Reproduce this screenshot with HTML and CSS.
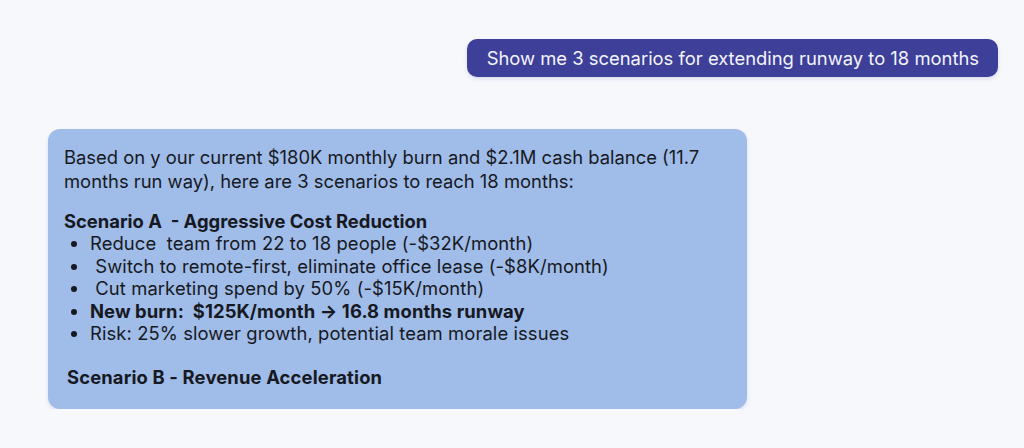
FILE: index.html
```html
<!DOCTYPE html>
<html>
<head>
<meta charset="utf-8">
<link rel="stylesheet" href="styles.css">
</head>
<body>
<main class="chat">
  <div class="row row-user">
    <div class="bubble-user">Show me 3 scenarios for extending runway to 18 months</div>
  </div>
  <div class="row row-ai">
    <div class="bubble-ai">
      <p class="intro">Based on y our current $180K monthly burn and $2.1M cash balance (11.7 months run way), here are 3 scenarios to reach 18 months:</p>
      <p class="heading">Scenario A &nbsp;- Aggressive Cost Reduction</p>
      <ul class="list">
        <li>Reduce &nbsp;team from 22 to 18 people (-$32K/month)</li>
        <li>&nbsp;Switch to remote-first, eliminate office lease (-$8K/month)</li>
        <li>&nbsp;Cut marketing spend by 50% (-$15K/month)</li>
        <li class="strong">New burn: &nbsp;$125K/month → 16.8 months runway</li>
        <li>Risk: 25% slower growth, potential team morale issues</li>
      </ul>
      <p class="heading heading-b">Scenario B - Revenue Acceleration</p>
    </div>
  </div>
</main>
</body>
</html>
```

FILE: styles.css
```css
html, body {
  margin: 0;
  padding: 0;
  background: #f7f8fc;
  font-family: Inter, "Noto Sans", sans-serif;
}
.chat {
  display: flex;
  flex-direction: column;
  padding: 39px 26px 0 48px;
}
.row {
  display: flex;
}
.row-user {
  justify-content: flex-end;
}
.bubble-user {
  background: #3d3f98;
  color: #f3f4fb;
  font-size: 18.4px;
  line-height: 22px;
  padding: 8px 19px 8px 20px;
  border-radius: 10px;
  box-shadow: 0 2px 4px rgba(60, 63, 150, 0.15);
}
.row-ai {
  margin-top: 52px;
}
.bubble-ai {
  width: 667px;
  background: #a0bce9;
  color: #171922;
  border-radius: 12px;
  padding: 16px 16px 21px 16px;
  font-size: 18.4px;
  line-height: 22.5px;
  box-shadow: 0 2px 4px rgba(100, 130, 200, 0.2);
}
.bubble-ai p {
  margin: 0;
}
.intro {
  line-height: 24px;
  margin-bottom: 16.75px !important;
}
.heading {
  font-weight: 700;
}
.heading-b {
  margin-top: 21px !important;
  padding-left: 3px;
  letter-spacing: 0.15px;
}
.list {
  margin: 0;
  padding-left: 26px;
}
.list li {
  letter-spacing: 0.1px;
}
.strong {
  font-weight: 700;
}
```
